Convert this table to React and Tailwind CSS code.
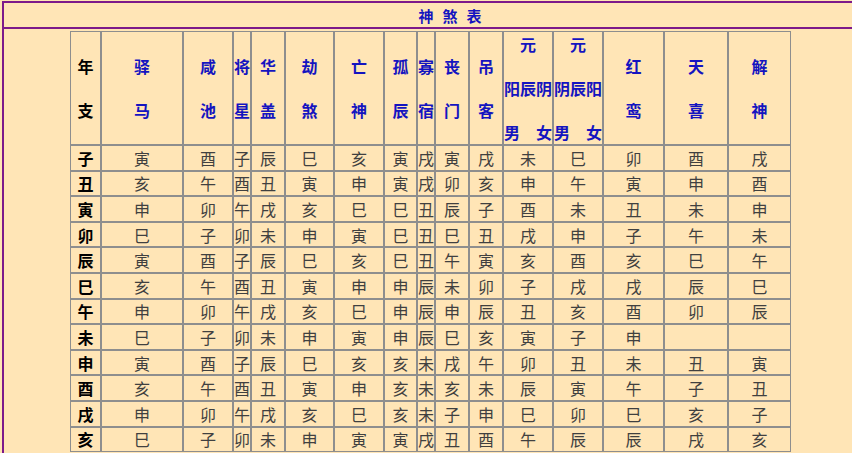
/**
 * ShenShaTable — 神煞表 lookup grid (年支 → 各神煞).
 */
import React from "react";

const COLS = "grid-cols-[31px_82px_50px_18px_34px_49px_50px_33px_18px_34px_34px_50px_50px_61px_64px_63px]";

const HEADS = [
  ["驿", "马"], ["咸", "池"], ["将", "星"], ["华", "盖"], ["劫", "煞"], ["亡", "神"],
  ["孤", "辰"], ["寡", "宿"], ["丧", "门"], ["吊", "客"],
];

const TAIL_HEADS = [["红", "鸾"], ["天", "喜"], ["解", "神"]];

const ROWS = [
  ["子", "寅", "酉", "子", "辰", "巳", "亥", "寅", "戌", "寅", "戌", "未", "巳", "卯", "酉", "戌"],
  ["丑", "亥", "午", "酉", "丑", "寅", "申", "寅", "戌", "卯", "亥", "申", "午", "寅", "申", "酉"],
  ["寅", "申", "卯", "午", "戌", "亥", "巳", "巳", "丑", "辰", "子", "酉", "未", "丑", "未", "申"],
  ["卯", "巳", "子", "卯", "未", "申", "寅", "巳", "丑", "巳", "丑", "戌", "申", "子", "午", "未"],
  ["辰", "寅", "酉", "子", "辰", "巳", "亥", "巳", "丑", "午", "寅", "亥", "酉", "亥", "巳", "午"],
  ["巳", "亥", "午", "酉", "丑", "寅", "申", "申", "辰", "未", "卯", "子", "戌", "戌", "辰", "巳"],
  ["午", "申", "卯", "午", "戌", "亥", "巳", "申", "辰", "申", "辰", "丑", "亥", "酉", "卯", "辰"],
  ["未", "巳", "子", "卯", "未", "申", "寅", "申", "辰", "巳", "亥", "寅", "子", "申", "", ""],
  ["申", "寅", "酉", "子", "辰", "巳", "亥", "亥", "未", "戌", "午", "卯", "丑", "未", "丑", "寅"],
  ["酉", "亥", "午", "酉", "丑", "寅", "申", "亥", "未", "亥", "未", "辰", "寅", "午", "子", "丑"],
  ["戌", "申", "卯", "午", "戌", "亥", "巳", "亥", "未", "子", "申", "巳", "卯", "巳", "亥", "子"],
  ["亥", "巳", "子", "卯", "未", "申", "寅", "寅", "戌", "丑", "酉", "午", "辰", "辰", "戌", "亥"],
];

const cell = "border border-[#8e8e8e] flex items-center justify-center whitespace-nowrap";

function TwoLine({ a, b, black }) {
  return (
    <div className={`${cell} flex-col gap-[22px] font-bold text-[16px] leading-[22px] ${black ? "text-black" : "text-[#1414c0]"}`}>
      <span>{a}</span>
      <span>{b}</span>
    </div>
  );
}

function YuanHead({ mid }) {
  return (
    <div className={`${cell} flex-col gap-[22px] font-bold text-[16px] leading-[22px] text-[#1414c0]`}>
      <span>元</span>
      <span>{mid}</span>
      <span className="w-full flex justify-between"><span>男</span><span>女</span></span>
    </div>
  );
}

export default function App() {
  return (
    <div className="w-[852px] h-[453px] overflow-hidden bg-[#ffe5b6]"
         style={{ fontFamily: '"Noto Sans CJK SC", "Noto Sans", sans-serif' }}>
      <div className="ml-[2px] mt-px w-[894px] h-[470px] border-l-2 border-t-2 border-[#7d1a8a]">
        {/* title bar */}
        <div className="h-[26px] border-b-2 border-[#7d1a8a] flex items-center justify-center pl-[9px]">
          <span className="text-[15px] font-bold text-[#1414c0] tracking-[9px] leading-none">神煞表</span>
        </div>

        {/* table */}
        <div className="pl-[66px] pt-[2px]">
          <div className={`grid ${COLS} w-[721px] grid-rows-[114px] auto-rows-[25.6px]`}>
            <TwoLine a="年" b="支" black />
            {HEADS.map(([a, b], i) => <TwoLine key={i} a={a} b={b} />)}
            <YuanHead mid="阳辰阴" />
            <YuanHead mid="阴辰阳" />
            {TAIL_HEADS.map(([a, b], i) => <TwoLine key={i} a={a} b={b} />)}

            {ROWS.map((r, ri) =>
              r.map((v, ci) => (
                <div key={`${ri}-${ci}`}
                     className={`${cell} text-[16px] leading-none ${ci === 0 ? "font-bold text-black" : "font-normal text-[#404040]"}`}>
                  {v}
                </div>
              ))
            )}
          </div>
        </div>
      </div>
    </div>
  );
}
